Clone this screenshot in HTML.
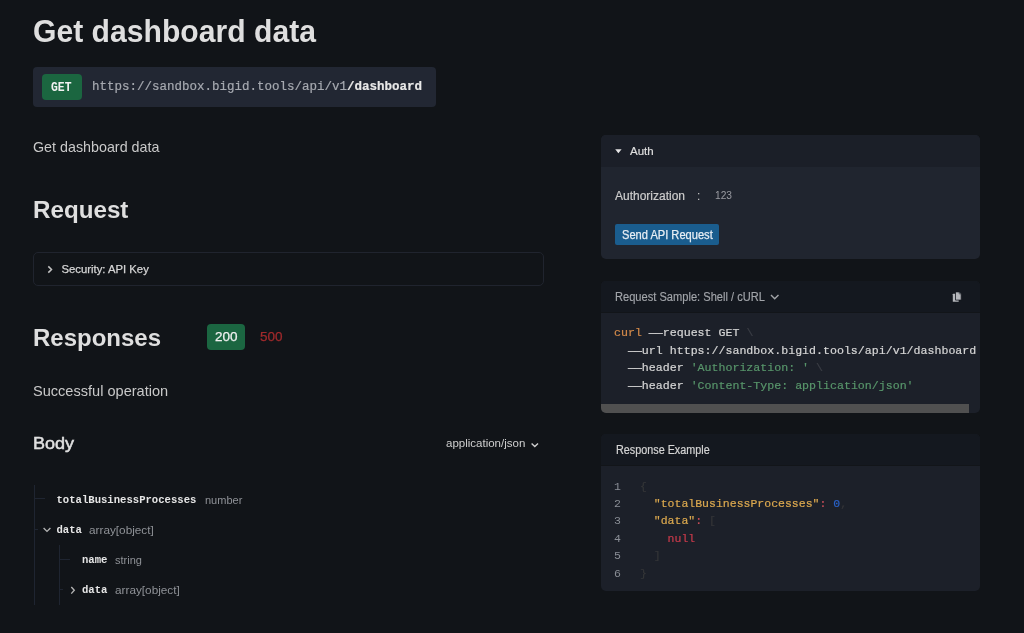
<!DOCTYPE html>
<html><head><meta charset="utf-8">
<style>
html,body{margin:0;padding:0;}
body{width:1024px;height:633px;overflow:hidden;background:#111418;font-family:"Liberation Sans",sans-serif;position:relative;color:#e2e2e2;}
.a{position:absolute;white-space:pre;line-height:1;}
.mono{font-family:"Liberation Mono",monospace;}
.cs{-webkit-text-stroke-width:0.2px;}
.box{position:absolute;box-sizing:border-box;}
.sx{transform-origin:0 0;}
</style></head>
<body>
<div id="root" style="position:absolute;left:0;top:0;width:1024px;height:633px;will-change:transform;background:#111418;">
<!-- Title -->
<div class="a" id="title" style="left:33px;top:16px;font-size:31px;font-weight:bold;transform:scaleX(0.972);transform-origin:0 0;color:#dfdfdf;">Get dashboard data</div>

<!-- GET box -->
<div class="box" style="left:33px;top:67px;width:403px;height:40px;background:#222733;border-radius:4px;"></div>
<div class="box" style="left:42px;top:74px;width:40px;height:26px;background:#1b6640;border-radius:4px;"></div>
<div class="a mono" id="get" style="left:51px;top:81.5px;font-size:12.5px;transform:scaleX(0.91);transform-origin:0 0;font-weight:bold;color:#f2f2f2;">GET</div>
<div class="a mono cs" id="url" style="left:92px;top:81px;font-size:12.5px;color:#a6a9b0;">https://sandbox.bigid.tools/api/v1<b style="color:#e8e8e8">/dashboard</b></div>

<!-- description -->
<div class="a" id="desc" style="left:33px;top:140px;font-size:14.3px;color:#c9c9c9;">Get dashboard data</div>

<!-- Request -->
<div class="a" id="req" style="left:33px;top:197.7px;font-size:24.2px;font-weight:bold;color:#dfdfdf;">Request</div>

<!-- Security box -->
<div class="box" style="left:33px;top:252px;width:511px;height:34px;border:1px solid #20242e;border-radius:5px;"></div>
<svg class="box" style="left:46px;top:264px;" width="8" height="11" viewBox="0 0 8 11"><path d="M2.3 2.4 L5.5 5.5 L2.3 8.6" fill="none" stroke="#c2c2c2" stroke-width="1.5"/></svg>
<div class="a" id="sec" style="left:61.5px;top:264px;font-size:11.3px;color:#d6d6d6;-webkit-text-stroke:0.25px #d6d6d6;">Security: API Key</div>

<!-- Responses -->
<div class="a" id="resp" style="left:33px;top:326px;font-size:24px;font-weight:bold;color:#dfdfdf;">Responses</div>
<div class="box" style="left:207px;top:323.5px;width:38.3px;height:26px;background:#1b6641;border-radius:4px;"></div>
<div class="a" id="s200" style="left:215px;top:330px;font-size:13px;transform:scaleX(1.04);transform-origin:0 0;color:#f0f0f0;-webkit-text-stroke:0.25px #f0f0f0;">200</div>
<div class="a" id="s500" style="left:259.5px;top:330px;font-size:13px;transform:scaleX(1.04);transform-origin:0 0;color:#a02a2c;-webkit-text-stroke:0.25px #a02a2c;">500</div>

<div class="a" id="succ" style="left:33px;top:384px;font-size:14.57px;color:#c9c9c9;">Successful operation</div>

<div class="a" id="body" style="left:33px;top:435px;font-size:17px;color:#e0e0e0;-webkit-text-stroke:0.5px #e0e0e0;transform:scaleX(1.06);transform-origin:0 0;">Body</div>
<div class="a" id="appj" style="left:446px;top:438.3px;font-size:11.5px;color:#cfcfcf;">application/json</div>
<svg class="box" style="left:530px;top:440.7px;" width="10" height="8" viewBox="0 0 10 8"><path d="M1.6 2.4 L4.8 5.5 L8 2.4" fill="none" stroke="#cfcfcf" stroke-width="1.4"/></svg>

<!-- tree -->
<div class="box" style="left:34px;top:485px;width:1px;height:120px;background:#1f2531;"></div>
<div class="box" style="left:34px;top:498px;width:11px;height:1px;background:#1f2531;"></div>
<div class="box" style="left:34px;top:529px;width:4px;height:1px;background:#1f2531;"></div>
<div class="box" style="left:59px;top:545px;width:1px;height:60px;background:#1f2531;"></div>
<div class="box" style="left:59px;top:559px;width:11px;height:1px;background:#1f2531;"></div>
<div class="box" style="left:59px;top:589px;width:4px;height:1px;background:#1f2531;"></div>

<div class="a mono" id="t1" style="left:56.5px;top:494.5px;font-size:10.6px;font-weight:bold;color:#e6e6e6;">totalBusinessProcesses</div>
<div class="a" id="t1b" style="left:205px;top:494.5px;font-size:11px;color:#8f9297;">number</div>
<svg class="box" style="left:42px;top:525px;" width="10" height="9" viewBox="0 0 10 9"><path d="M1.6 3.1 L5 6.4 L8.4 3.1" fill="none" stroke="#b4b4b4" stroke-width="1.35"/></svg>
<div class="a mono" id="t2" style="left:56.5px;top:524.5px;font-size:10.6px;font-weight:bold;color:#e6e6e6;">data</div>
<div class="a" id="t2b" style="left:89px;top:524.5px;font-size:11px;transform:scaleX(1.07);transform-origin:0 0;color:#8f9297;">array[object]</div>
<div class="a mono" id="t3" style="left:82px;top:554.5px;font-size:10.6px;font-weight:bold;color:#e6e6e6;">name</div>
<div class="a" id="t3b" style="left:115px;top:554.5px;font-size:11px;color:#8f9297;">string</div>
<svg class="box" style="left:69px;top:585px;" width="8" height="10" viewBox="0 0 8 10"><path d="M2.3 2 L5.3 5.3 L2.3 8.6" fill="none" stroke="#b4b4b4" stroke-width="1.35"/></svg>
<div class="a mono" id="t4" style="left:82px;top:585px;font-size:10.6px;font-weight:bold;color:#e6e6e6;">data</div>
<div class="a" id="t4b" style="left:115px;top:585px;font-size:11px;transform:scaleX(1.07);transform-origin:0 0;color:#8f9297;">array[object]</div>

<!-- Auth panel -->
<div class="box" style="left:601px;top:135px;width:379px;height:124px;background:#20252f;border-radius:5px;overflow:hidden;">
  <div class="box" style="left:0;top:0;width:379px;height:32px;background:#1b1f28;"></div>
</div>
<svg class="box" style="left:614px;top:148px;" width="9" height="7" viewBox="0 0 9 7"><path d="M1.2 1.3 H7.6 L4.4 5.3 Z" fill="#e6e6e6"/></svg>
<div class="a" id="auth" style="left:630px;top:146px;font-size:11.5px;color:#dedede;-webkit-text-stroke:0.2px #dedede;">Auth</div>
<div class="a" id="authz" style="left:615px;top:190px;font-size:12px;color:#cccccc;-webkit-text-stroke:0.2px #cccccc;">Authorization</div>
<div class="a" id="colon" style="left:697px;top:190px;font-size:12px;color:#c8c8c8;">:</div>
<div class="a" id="v123" style="left:715px;top:191px;font-size:10.2px;color:#9a9ca2;">123</div>
<div class="box" style="left:615px;top:224px;width:104px;height:21px;background:#1a5d8e;border-radius:2px;"></div>
<div class="a" id="send" style="left:622px;top:229px;font-size:12px;transform:scaleX(0.925);transform-origin:0 0;color:#e8eef4;-webkit-text-stroke:0.25px #e8eef4;">Send API Request</div>

<!-- Request sample panel -->
<div class="box" style="left:601px;top:281px;width:379px;height:131.5px;background:#1c2029;border-radius:5px;overflow:hidden;">
  <div class="box" style="left:0;top:0;width:379px;height:32px;background:#14181f;border-bottom:1px solid #121519;"></div>
  <div class="box" style="left:0;top:122.5px;width:368px;height:9px;background:#505050;"></div>
</div>
<div class="a" id="rsamp" style="left:614.5px;top:291px;font-size:12px;transform:scaleX(0.925);transform-origin:0 0;color:#a2a5aa;-webkit-text-stroke:0.15px #a2a5aa;">Request Sample: Shell / cURL</div>
<svg class="box" style="left:770px;top:292px;" width="10" height="9" viewBox="0 0 10 9"><path d="M1 3.1 L4.7 6.8 L8.5 3.0" fill="none" stroke="#a2a4a8" stroke-width="1.4"/></svg>
<svg class="box" style="left:952px;top:291px;" width="10" height="12" viewBox="0 0 10 12"><rect x="0.8" y="2.8" width="5.9" height="8" rx="0.4" fill="#b4b6bb"/><path d="M3.5 0.9 H7.3 L9.2 2.8 V9.1 H3.5 Z" fill="#b4b6bb" stroke="#14181f" stroke-width="0.8"/><path d="M7.2 1.1 V2.9 H9" fill="none" stroke="#14181f" stroke-width="0.5"/></svg>

<div class="a mono cs" id="c1" style="left:614px;top:327px;font-size:11.62px;color:#d6d6d6;"><span style="color:#d48a4a">curl</span> ——request GET <span style="color:#3b3e45">\</span></div>
<div class="a mono cs" id="c2" style="left:614px;top:345px;font-size:11.62px;color:#d6d6d6;">  ——url https://sandbox.bigid.tools/api/v1/dashboard</div>
<div class="a mono cs" id="c3" style="left:614px;top:362px;font-size:11.62px;color:#d6d6d6;">  ——header <span style="color:#58966b">'Authorization: '</span> <span style="color:#3b3e45">\</span></div>
<div class="a mono cs" id="c4" style="left:614px;top:380px;font-size:11.62px;color:#d6d6d6;">  ——header <span style="color:#58966b">'Content-Type: application/json'</span></div>

<!-- Response example panel -->
<div class="box" style="left:601px;top:434px;width:379px;height:157px;background:#1c2029;border-radius:5px;overflow:hidden;">
  <div class="box" style="left:0;top:0;width:379px;height:32px;background:#14181f;border-bottom:1px solid #121519;"></div>
</div>
<div class="a" id="rex" style="left:615.5px;top:444px;font-size:12px;transform:scaleX(0.9);transform-origin:0 0;color:#d4d4d4;-webkit-text-stroke:0.2px #d4d4d4;">Response Example</div>
<div class="a mono" id="ln" style="left:614px;top:477.5px;font-size:11.5px;color:#8a8e96;line-height:17.4px;">1
2
3
4
5
6</div>
<div class="a mono cs" id="code" style="left:640px;top:477.5px;font-size:11.5px;color:#353638;line-height:17.4px;">{
  <span style="color:#dca94f">"totalBusinessProcesses"</span><span style="color:#c94f59">:</span> <span style="color:#2a62c9">0</span>,
  <span style="color:#dca94f">"data"</span><span style="color:#c94f59">:</span> [
    <span style="color:#c93a4b">null</span>
  ]
}</div>
</div>
</body></html>
